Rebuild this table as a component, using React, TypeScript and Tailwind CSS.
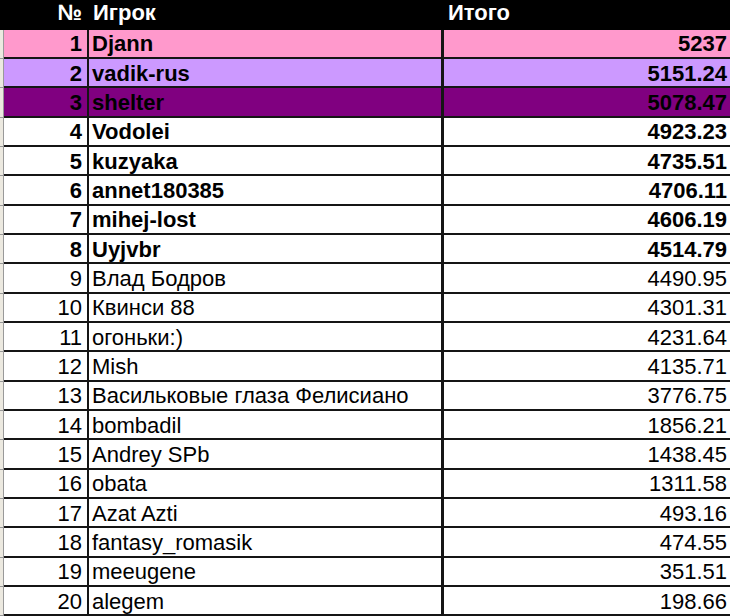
import { FC } from "react";

interface Row {
  n: number;
  name: string;
  total: string;
  bg?: string;
  bold?: boolean;
}

const rows: Row[] = [
  { n: 1, name: "Djann", total: "5237", bg: "bg-[#ff99cc]", bold: true },
  { n: 2, name: "vadik-rus", total: "5151.24", bg: "bg-[#cc99ff]", bold: true },
  { n: 3, name: "shelter", total: "5078.47", bg: "bg-[#800080]", bold: true },
  { n: 4, name: "Vodolei", total: "4923.23", bold: true },
  { n: 5, name: "kuzyaka", total: "4735.51", bold: true },
  { n: 6, name: "annet180385", total: "4706.11", bold: true },
  { n: 7, name: "mihej-lost", total: "4606.19", bold: true },
  { n: 8, name: "Uyjvbr", total: "4514.79", bold: true },
  { n: 9, name: "Влад Бодров", total: "4490.95" },
  { n: 10, name: "Квинси 88", total: "4301.31" },
  { n: 11, name: "огоньки:)", total: "4231.64" },
  { n: 12, name: "Mish", total: "4135.71" },
  { n: 13, name: "Васильковые глаза Фелисиано", total: "3776.75" },
  { n: 14, name: "bombadil", total: "1856.21" },
  { n: 15, name: "Andrey SPb", total: "1438.45" },
  { n: 16, name: "obata", total: "1311.58" },
  { n: 17, name: "Azat Azti", total: "493.16" },
  { n: 18, name: "fantasy_romasik", total: "474.55" },
  { n: 19, name: "meeugene", total: "351.51" },
  { n: 20, name: "alegem", total: "198.66" },
];

const App: FC = () => {
  return (
    <div className="w-[730px] h-[616px] overflow-hidden bg-white font-['Liberation_Sans',Arial,sans-serif] text-[22px] leading-none text-black">
      {/* Header */}
      <div className="flex h-[29.5px] bg-black text-white font-bold">
        <div className="w-[89px] flex items-center justify-end pr-[7px] pb-[4px]">№</div>
        <div className="w-[355px] flex items-center pl-[4px] pb-[4px]">Игрок</div>
        <div className="flex-1 flex items-center pl-[4px] pb-[4px]">Итого</div>
      </div>

      {/* Rows */}
      {rows.map((r) => (
        <div key={r.n} className={`flex h-[29.35px] ${r.bold ? "font-bold" : ""}`}>
          <div className="w-[4px] shrink-0 bg-[#ece9e0] border-r border-b border-[#999999]" />
          <div
            className={`w-[85px] shrink-0 flex items-center justify-end pr-[5px] pt-[2px] border-r-2 border-b-2 border-[#151515] ${r.bg ?? ""}`}
          >
            {r.n}
          </div>
          <div
            className={`w-[355px] shrink-0 flex items-center pl-[3px] pt-[2px] whitespace-nowrap border-r-[3px] border-b-2 border-[#151515] ${r.bg ?? ""}`}
          >
            {r.name}
          </div>
          <div
            className={`flex-1 flex items-center justify-end pr-[3px] pt-[2px] border-b-2 border-[#151515] ${r.bg ?? ""}`}
          >
            {r.total}
          </div>
        </div>
      ))}
    </div>
  );
};

export default App;
